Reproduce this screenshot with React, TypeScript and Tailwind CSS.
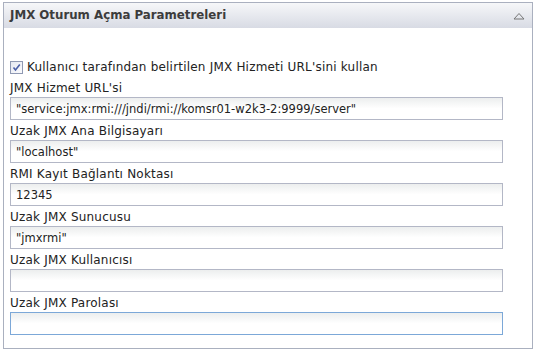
import { useState } from 'react';

const fields = [
  { label: "JMX Hizmet URL'si", value: '"service:jmx:rmi:///jndi/rmi://komsr01-w2k3-2:9999/server"' },
  { label: 'Uzak JMX Ana Bilgisayarı', value: '"localhost"' },
  { label: 'RMI Kayıt Bağlantı Noktası', value: '12345' },
  { label: 'Uzak JMX Sunucusu', value: '"jmxrmi"' },
  { label: 'Uzak JMX Kullanıcısı', value: '' },
  { label: 'Uzak JMX Parolası', value: '', focus: true },
];

export default function App() {
  const [useUrl, setUseUrl] = useState(true);

  return (
    <div className="min-h-[351px] bg-white pl-[3px] pt-[2px] font-['DejaVu_Sans',Verdana,sans-serif] text-[12px] tracking-[0.2px] text-[#222]">
      <div className="w-[530px] h-[347px] border border-[#aab0bf] flex flex-col">
        <div className="h-[25px] flex items-center justify-between pl-[6px] pr-[5px] bg-gradient-to-b from-[#f6f7f9] to-[#d8dbe4]">
          <span className="font-bold text-[11.8px] tracking-normal text-[#3c3c3c]">JMX Oturum Açma Parametreleri</span>
          <svg width="12" height="8" viewBox="0 0 12 8" className="mr-[2px]">
            <path d="M1 7 L6 1.5 L11 7 Z" fill="none" stroke="#777" strokeWidth="1" />
          </svg>
        </div>

        <div className="pl-[6px] pt-[29px]">
          <label className="h-[20px] flex items-center gap-[4px]">
            <span
              onClick={() => setUseUrl(!useUrl)}
              className="w-[13px] h-[13px] border border-[#8f99b3] bg-gradient-to-br from-[#e4e8f1] to-[#fbfbfd] flex items-center justify-center"
            >
              {useUrl && (
                <svg width="9" height="9" viewBox="0 0 9 9">
                  <path d="M1.5 4.5 L3.5 7 L7.8 1.5" fill="none" stroke="#4a5fa8" strokeWidth="1.6" />
                </svg>
              )}
            </span>
            <span>Kullanıcı tarafından belirtilen JMX Hizmeti URL'sini kullan</span>
          </label>

          {fields.map(f => (
            <div key={f.label}>
              <div className="h-[20px] leading-[22px]">{f.label}</div>
              <input
                defaultValue={f.value}
                className={`w-[493px] h-[23px] px-[5px] border outline-none text-[11.5px] tracking-normal text-[#222] bg-gradient-to-b from-[#eceeee] via-[#ffffff] to-[#ffffff] ${f.focus ? 'border-[#7ca8d8]' : 'border-[#b3b7c6]'}`}
              />
            </div>
          ))}
        </div>
      </div>
    </div>
  );
}
